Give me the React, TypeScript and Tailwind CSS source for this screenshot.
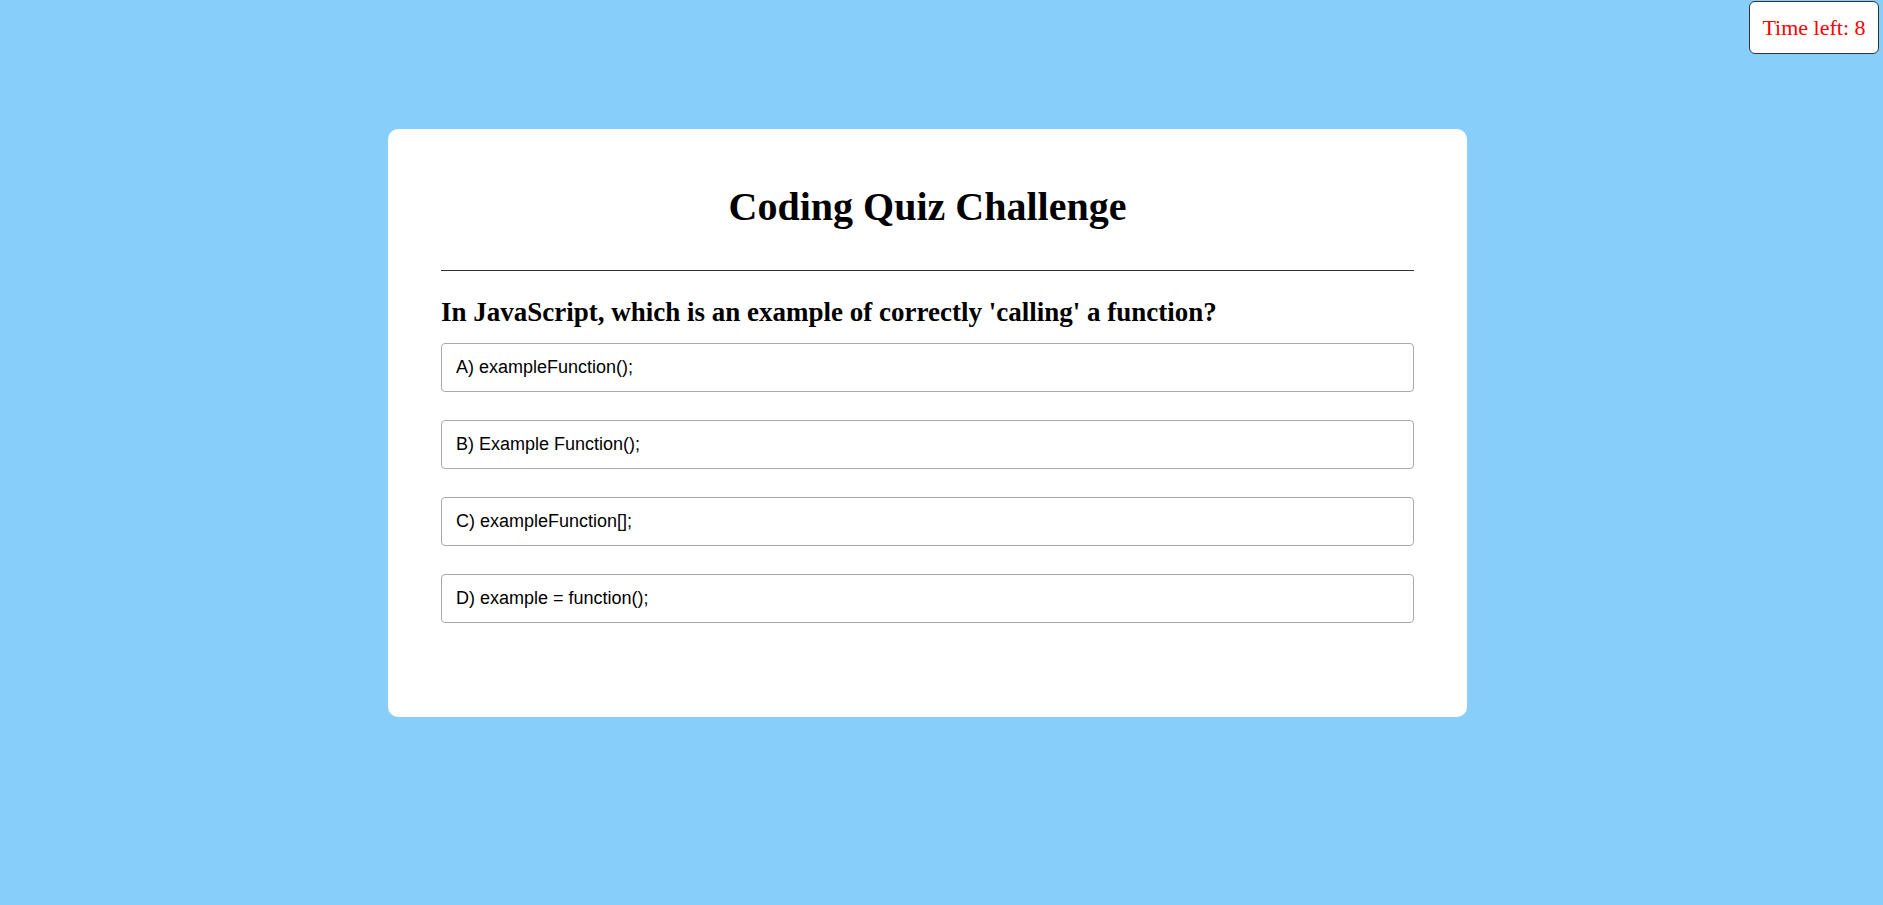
export default function App() {
  const options = [
    'A) exampleFunction();',
    'B) Example Function();',
    'C) exampleFunction[];',
    'D) example = function();',
  ];

  return (
    <div className="relative min-h-[905px] w-full bg-[#87cefa] pt-[129px] font-['Liberation_Serif',serif]">
      {/* Timer */}
      <div className="absolute right-[4px] top-[1px] flex h-[53px] w-[130px] items-center justify-center rounded-[6px] border border-[#333] bg-white text-[22px] leading-none text-[#ff0000]">
        Time left: 8
      </div>

      {/* Quiz card */}
      <div className="ml-[388px] w-[1079px] rounded-[10px] bg-white px-[53px] pb-[94px] pt-[58px]">
        <h1 className="text-center text-[40px] font-bold leading-[40px] text-black">
          Coding Quiz Challenge
        </h1>
        <hr className="mt-[43px] h-px border-0 bg-[#333]" />
        <h2 className="mt-[28px] text-[27px] font-bold leading-[27px] text-black">
          In JavaScript, which is an example of correctly 'calling' a function?
        </h2>
        <div className="mt-[17px] flex flex-col gap-[28px]">
          {options.map((opt) => (
            <button
              key={opt}
              className="flex h-[49px] w-full items-center rounded-[4px] border border-[#aaa] bg-white px-[14px] text-left font-['Liberation_Sans',Arial,sans-serif] text-[18px] text-black"
            >
              {opt}
            </button>
          ))}
        </div>
      </div>
    </div>
  );
}
